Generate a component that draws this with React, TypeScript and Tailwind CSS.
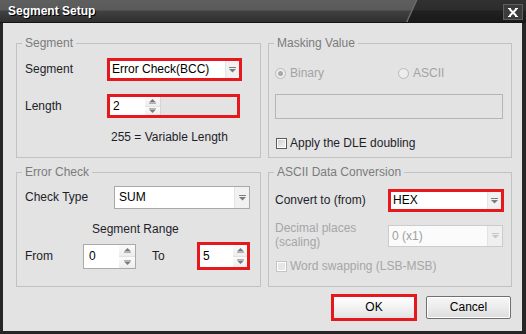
import React from 'react';

const sans = "font-['Liberation_Sans',Arial,sans-serif]";

function DropArrow({ disabled = false }: { disabled?: boolean }) {
  const c = disabled ? '#c6c6c6' : '#7c7c7c';
  return (
    <svg width="7" height="6" viewBox="0 0 7 6">
      <path d="M0 0.5h7" stroke={c} strokeWidth="1" />
      <path d="M0 2h7L3.5 5.5z" fill={c} />
    </svg>
  );
}

function SpinButtons({ className }: { className: string }) {
  return (
    <div className={`flex flex-col ${className}`}>
      <div className="flex-1 flex items-center justify-center bg-[linear-gradient(#fbfbfb,#ededed)] border-b border-[#e2e2e2]">
        <svg width="7" height="5" viewBox="0 0 7 5">
          <path d="M3.5 0L7 3.5H0z" fill="#7a7a7a" />
          <path d="M0 4.5h7" stroke="#b0b0b0" strokeWidth="1" />
        </svg>
      </div>
      <div className="flex-1 flex items-center justify-center bg-[linear-gradient(#fbfbfb,#ededed)]">
        <svg width="7" height="5" viewBox="0 0 7 5">
          <path d="M0 0.5h7" stroke="#b0b0b0" strokeWidth="1" />
          <path d="M0 1.5h7L3.5 5z" fill="#7a7a7a" />
        </svg>
      </div>
    </div>
  );
}

function Group({ title, children }: { title: string; children: React.ReactNode }) {
  return (
    <div className="border border-[#c2c2c2] h-[115px]">
      <div className="-mt-[8px] ml-[5px] w-fit px-[3px] bg-[#e3e3e3] text-[#7b7b7b]">{title}</div>
      {children}
    </div>
  );
}

function CheckBox({ disabled = false }: { disabled?: boolean }) {
  return (
    <div
      className={`w-[11px] h-[11px] border ${
        disabled ? 'border-[#c4c4c4] bg-[#e6e6e6]' : 'border-[#5c5c5c] bg-[linear-gradient(135deg,#cfcfcf,#f4f4f4)]'
      } shadow-[inset_0_0_0_1px_#ffffff]`}
    />
  );
}

export default function App() {
  return (
    <div className={`w-[526px] h-[334px] bg-[#262626] flex flex-col ${sans} text-[12px] leading-[15px] text-[#1e1e2a]`}>
      {/* title bar */}
      <div className="h-[23px] border-b border-[#141414] flex bg-[linear-gradient(#5f5f5f,#5a5a5a_45%,#414141_50%,#2f2f2f)]">
        <div className="flex-1 pl-[8px] pt-[4px] text-white font-bold [text-shadow:1px_1px_0_#000]">Segment Setup</div>
        <div className="w-[120px] bg-[#6c6c6c] [clip-path:polygon(10px_0,100%_0,100%_100%,0_100%)]">
          <div className="ml-[1.5px] h-full bg-[linear-gradient(#313131,#2c2c2c_45%,#202020_50%,#1a1a1a)] [clip-path:polygon(10px_0,100%_0,100%_100%,0_100%)] flex justify-end pt-[4px] pr-[3px]">
            <div className="w-[20px] h-[16px] bg-[#3b3b3b] border border-[#5e5e5e] flex items-center justify-center">
              <svg width="10" height="9" viewBox="0 0 10 9">
                <path d="M1.5 1L8.5 8M8.5 1L1.5 8" stroke="#ffffff" strokeWidth="2" />
                <path d="M0 0.5h3M7 0.5h3M0 8.5h3M7 8.5h3" stroke="#ffffff" strokeWidth="1" />
              </svg>
            </div>
          </div>
        </div>
      </div>

      {/* body */}
      <div className="flex-1 ml-[3px] mr-[4px] mb-[3px] bg-[#e3e3e3] pt-[20px] pl-[13px] pr-[10px]">
        <div className="flex gap-[7px]">
          {/* left column */}
          <div className="w-[245px] flex flex-col gap-[14px]">
            <Group title="Segment">
              <div className="mt-[7px] flex items-center h-[23px]">
                <div className="pl-[8px] w-[90px]">Segment</div>
                <div className="w-[135px] h-[23px] border-[3px] border-[#e5181e] bg-white flex">
                  <div className="flex-1 pl-[2px] flex items-center text-black">Error Check(BCC)</div>
                  <div className="w-[14px] bg-[#f1f1f1] border-l border-[#e4e4e4] flex items-center justify-center">
                    <DropArrow />
                  </div>
                </div>
              </div>
              <div className="mt-[13px] flex items-center h-[24px]">
                <div className="pl-[8px] w-[90px]">Length</div>
                <div className="w-[133px] h-[24px] border-[3px] border-[#e5181e] flex">
                  <div className="w-[35px] bg-white pl-[3px] flex items-center text-black">2</div>
                  <SpinButtons className="w-[16px] border-r border-[#d6d6d6]" />
                  <div className="flex-1 bg-[#e3e3e3]" />
                </div>
              </div>
              <div className="mt-[12px] pl-[94px]">255 = Variable Length</div>
            </Group>

            <Group title="Error Check">
              <div className="mt-[6px] flex items-center h-[23px]">
                <div className="pl-[8px] w-[97px]">Check Type</div>
                <div className="w-[136px] h-[23px] border border-[#a9a9a9] bg-white flex">
                  <div className="flex-1 pl-[4px] flex items-center text-black">SUM</div>
                  <div className="w-[15px] bg-[#f1f1f1] border-l border-[#e4e4e4] flex items-center justify-center">
                    <DropArrow />
                  </div>
                </div>
              </div>
              <div className="mt-[13px] pl-[75px]">Segment Range</div>
              <div className="mt-[5px] flex items-center h-[28px]">
                <div className="pl-[8px] w-[66px]">From</div>
                <div className="w-[53px] h-[25px] border border-[#a9a9a9] bg-white flex">
                  <div className="flex-1 pl-[5px] flex items-center text-black">0</div>
                  <SpinButtons className="w-[16px]" />
                </div>
                <div className="pl-[16px] w-[61px]">To</div>
                <div className="w-[53px] h-[28px] border-[3px] border-[#e5181e] bg-white flex">
                  <div className="flex-1 pl-[3px] flex items-center text-black">5</div>
                  <SpinButtons className="w-[14px]" />
                </div>
              </div>
            </Group>
          </div>

          {/* right column */}
          <div className="w-[244px] flex flex-col gap-[14px]">
            <Group title="Masking Value">
              <div className="mt-[14px] flex items-center h-[16px] pl-[6px] text-[#a3a3a3]">
                <div className="w-[123px] flex items-center gap-[4px]">
                  <div className="w-[11px] h-[11px] rounded-full border border-[#b9b9b9] bg-[#ededed] flex items-center justify-center">
                    <div className="w-[5px] h-[5px] rounded-full bg-[#a8a8a8]" />
                  </div>
                  <span>Binary</span>
                </div>
                <div className="flex items-center gap-[4px]">
                  <div className="w-[11px] h-[11px] rounded-full border border-[#b9b9b9] bg-[#ededed]" />
                  <span>ASCII</span>
                </div>
              </div>
              <div className="mt-[13px] ml-[6px] w-[228px] h-[25px] border border-[#b5b5b5]" />
              <div className="mt-[17px] flex items-center h-[15px] pl-[7px] gap-[3px]">
                <CheckBox />
                <span>Apply the DLE doubling</span>
              </div>
            </Group>

            <Group title="ASCII Data Conversion">
              <div className="mt-[9px] flex items-center h-[23px] pl-[6px]">
                <div className="w-[113px]">Convert to (from)</div>
                <div className="w-[116px] h-[23px] border-[3px] border-[#e5181e] bg-white flex">
                  <div className="flex-1 pl-[2px] flex items-center text-black">HEX</div>
                  <div className="w-[14px] bg-[#f1f1f1] border-l border-[#e4e4e4] flex items-center justify-center">
                    <DropArrow />
                  </div>
                </div>
              </div>
              <div className="mt-[9px] flex items-start pl-[6px]">
                <div className="w-[113px] leading-[14px] text-[#a6a6a6]">
                  Decimal places
                  <br />
                  (scaling)
                </div>
                <div className="mt-[4px] w-[115px] h-[22px] border border-[#cccccc] bg-[#f7f7f7] flex">
                  <div className="flex-1 pl-[3px] flex items-center text-[#a0a0a0] bg-[#fbfbfb]">0 (x1)</div>
                  <div className="w-[15px] bg-[#efefef] border-l border-[#e4e4e4] flex items-center justify-center">
                    <DropArrow disabled />
                  </div>
                </div>
              </div>
              <div className="mt-[10px] flex items-center h-[15px] pl-[7px] gap-[3px] text-[#a6a6a6]">
                <CheckBox disabled />
                <span>Word swapping (LSB-MSB)</span>
              </div>
            </Group>
          </div>
        </div>

        {/* buttons */}
        <div className="mt-[7px] flex justify-end items-center gap-[9px] h-[27px] pr-[1px]">
          <div className="w-[86px] h-[27px] border-[3px] border-[#e5181e] bg-[linear-gradient(#ffffff,#f2f2f2_50%,#e2e2e2)] flex items-center justify-center text-black">
            OK
          </div>
          <div className="w-[85px] h-[23px] border border-[#707070] rounded-[2px] bg-[linear-gradient(#f6f6f6,#ececec_50%,#dcdcdc)] shadow-[inset_0_0_0_1px_#ffffff] flex items-center justify-center text-black">
            Cancel
          </div>
        </div>
      </div>
    </div>
  );
}
